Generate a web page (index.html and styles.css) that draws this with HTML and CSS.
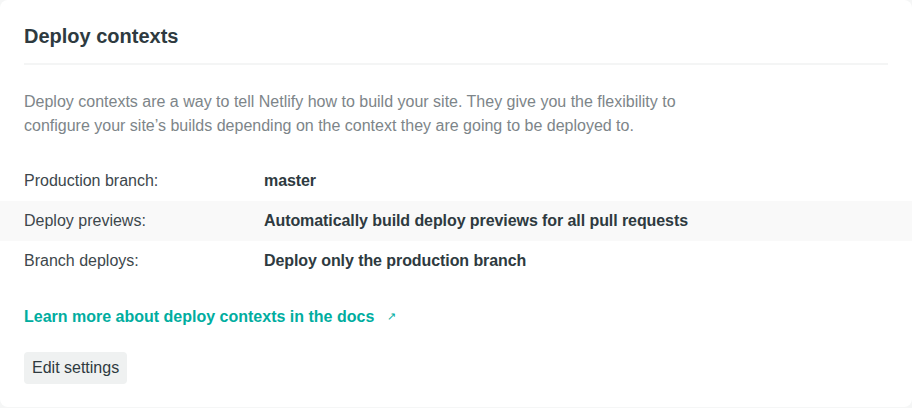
FILE: index.html
```html
<!DOCTYPE html>
<html lang="en">
<head>
    <meta charset="UTF-8">
    <title>Deploy contexts</title>
    <link rel="stylesheet" href="styles.css">
</head>
<body>
    <div class="card">
        <h2 class="card-title">Deploy contexts</h2>
        <p class="card-desc">Deploy contexts are a way to tell Netlify how to build your site. They give you the flexibility to configure your site’s builds depending on the context they are going to be deployed to.</p>

        <dl class="settings">
            <div class="setting-row">
                <dt>Production branch:</dt>
                <dd>master</dd>
            </div>
            <div class="setting-row striped">
                <dt>Deploy previews:</dt>
                <dd>Automatically build deploy previews for all pull requests</dd>
            </div>
            <div class="setting-row">
                <dt>Branch deploys:</dt>
                <dd>Deploy only the production branch</dd>
            </div>
        </dl>

        <a class="docs-link" href="#">Learn more about deploy contexts in the docs <span class="ext">↗</span></a>

        <div class="actions">
            <button class="btn">Edit settings</button>
        </div>
    </div>
</body>
</html>
```

FILE: styles.css
```css
body {
    margin: 0;
    background-color: #f5f6f6;
    font-family: 'Liberation Sans', Arial, sans-serif;
    color: #2e3a40;
}
.card {
    background-color: white;
    border-radius: 8px;
    padding: 24px 24px 24px;
    height: 407px;
    box-sizing: border-box;
}
.card-title {
    font-size: 20px;
    font-weight: bold;
    margin: 0;
    padding-bottom: 15px;
    line-height: 24px;
    border-bottom: 2px solid #f4f5f5;
}
.card-desc {
    font-size: 16px;
    line-height: 24px;
    color: #7d8589;
    margin: 25px 0 23px;
    max-width: 680px;
}
.settings {
    margin: 0 -24px;
}
.setting-row {
    display: flex;
    align-items: center;
    height: 40px;
    padding: 0 24px;
    font-size: 16px;
}
.setting-row.striped {
    background-color: #f9f9f9;
}
.setting-row dt {
    width: 240px;
    color: #3d474c;
}
.setting-row dd {
    margin: 0;
    font-weight: bold;
    letter-spacing: -0.08px;
}
.docs-link {
    display: inline-block;
    margin-top: 27px;
    color: #00ad9f;
    font-weight: bold;
    font-size: 16px;
    text-decoration: none;
}
.ext {
    font-size: 11px;
    font-weight: normal;
    margin-left: 8px;
    vertical-align: 2px;
}
.actions {
    margin-top: 26px;
}
.btn {
    font-family: inherit;
    font-size: 16px;
    color: #2e3a40;
    background-color: #eff1f1;
    border: none;
    border-radius: 4px;
    padding: 6px 8px;
    line-height: 20px;
}
```
